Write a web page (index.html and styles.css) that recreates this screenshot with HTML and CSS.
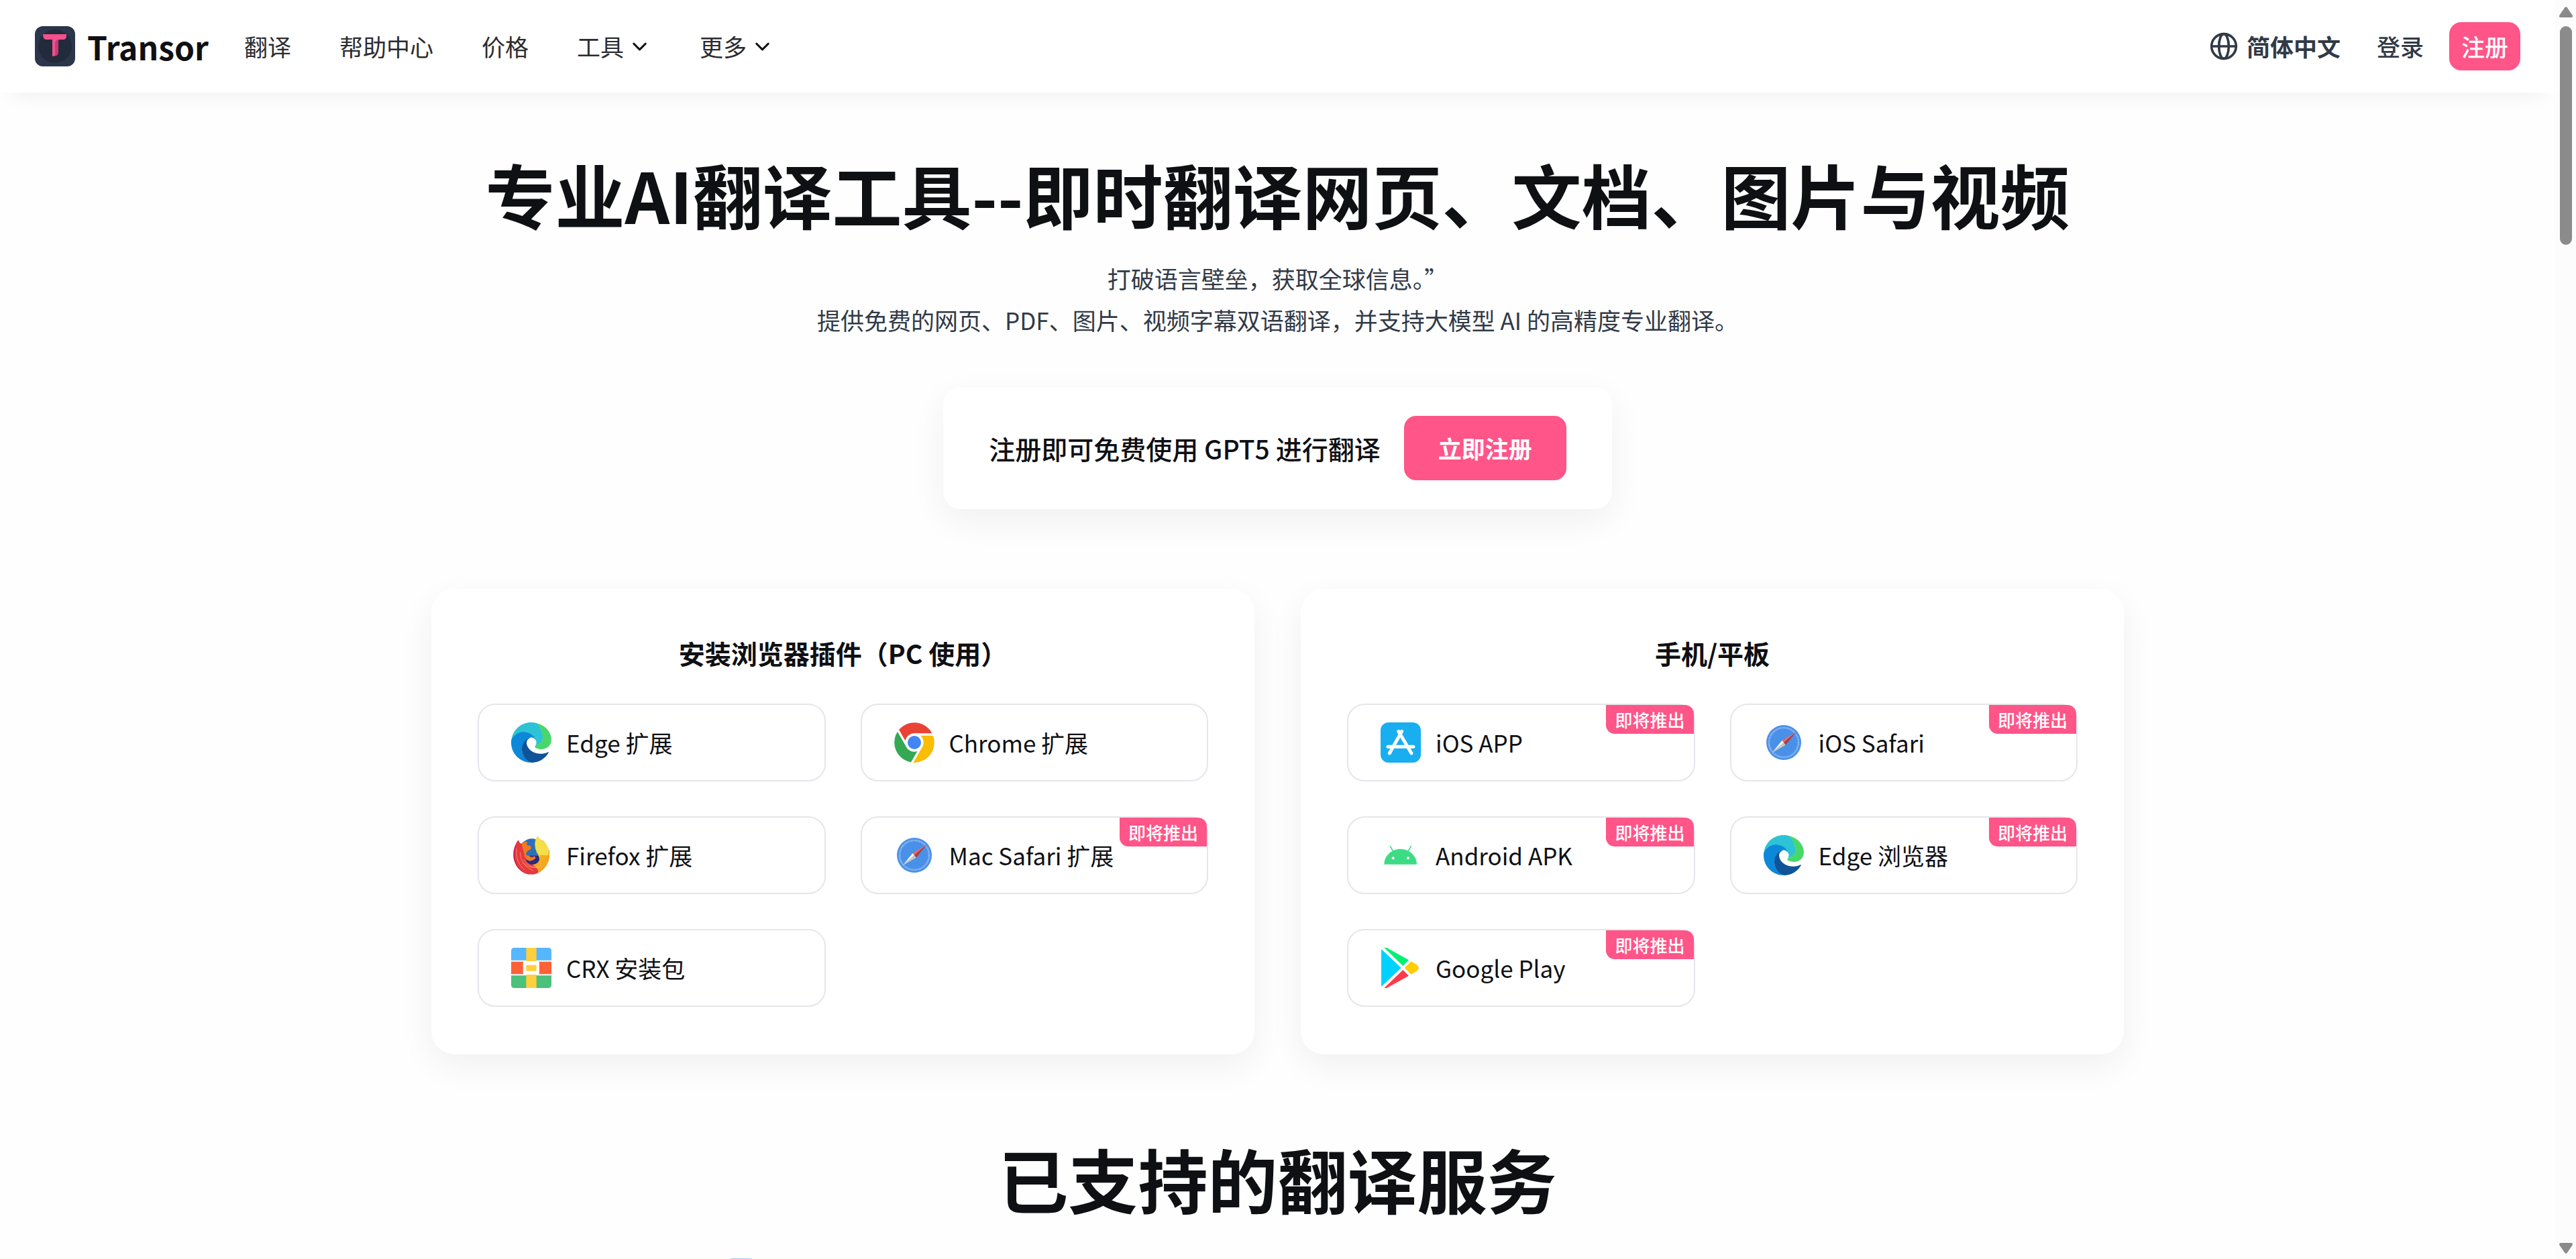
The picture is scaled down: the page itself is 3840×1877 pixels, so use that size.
FILE: index.html
```html
<!DOCTYPE html>
<html lang="zh-CN">
  <head>
    <meta charset="UTF-8" />
    <meta name="viewport" content="width=device-width, initial-scale=1.0" />
    <title>Transor</title>
    <link rel="stylesheet" href="styles.css">
  </head>
  <body>
    <!-- 公用图标 -->
    <svg class="sprite" aria-hidden="true">
      <symbol id="edge" viewBox="0 0 180 180">
        <path fill="#2dc3d6" d="M1 80C6 32 45 0 90 0c9 0 17 1 25 4 22 22 33 58 24 80-8 14-26 16-32 24 7-13 7-22 3-28-6-11-14-14-22-13L50 96Z" />
        <path fill="#0c88da" d="M1 78C18 48 42 42 58 43c28 2 50 20 54 46-3-16-14-23-24-22-26 7-40 35-40 55 2 30 22 55 47 58C42 182 0 142 0 90c0-4 0-8 1-12Z" />
        <path fill="#0f5499" d="M82 68C55 80 46 105 48 125c3 30 24 53 47 55 30-1 57-18 72-44 1-3-1-4-5-2-32 14-77 4-90-29-6-15-2-29 10-37Z" />
        <path fill="#49d769" d="M114 4c22 21 34 61 24 80-8 14-26 16-32 24-2 6 14 12 32 12 24-1 42-17 42-44-2-36-30-64-66-72Z" />
      </symbol>
      <symbol id="safari" viewBox="0 0 180 180">
        <circle cx="90" cy="90" r="78" fill="#4990e8" />
        <circle cx="90" cy="90" r="66" fill="none" stroke="#d5e6fb" stroke-width="8" stroke-dasharray="2 4" />
        <path fill="#e86a66" d="M146 42 82 81l8 9Z" />
        <path fill="#b13a3c" d="m146 42-56 48 8 11Z" />
        <path fill="#f5f5f5" d="m38 136 44-55 8 9Z" />
        <path fill="#c6c6c6" d="m38 136 52-46 8 11Z" />
      </symbol>
      <symbol id="down" viewBox="0 0 24 24">
        <path d="m6 9 6 6 6-6" fill="none" stroke="currentColor" stroke-width="2" stroke-linecap="round" stroke-linejoin="round" />
      </symbol>
    </svg>

    <div class="page">
      <header class="header">
        <a class="logo" href="#">
          <svg viewBox="0 0 60 60" aria-hidden="true">
            <rect width="60" height="60" rx="12" fill="#2b364a" />
            <circle cx="30" cy="30" r="25" fill="#222b3b" />
            <path fill="#f4508e" d="M12 12h35v3q0 5-5 5h-6q-1 0-1 2v16q0 6-9 7V20h-9q-5 0-5-8Z" />
            <path fill="#c93a75" d="M35 20v18q0 6-5 6.500V26q0-6 5-6Z" />
          </svg>
          <span>Transor</span>
        </a>
        <nav class="nav">
          <a href="#">翻译</a>
          <a href="#">帮助中心</a>
          <a href="#">价格</a>
          <button type="button">工具<svg><use href="#down" /></svg></button>
          <button type="button">更多<svg><use href="#down" /></svg></button>
        </nav>
        <div class="user">
          <button type="button" class="lang">
            <svg viewBox="0 0 24 24" fill="none" stroke="currentColor" stroke-width="2" aria-hidden="true">
              <circle cx="12" cy="12" r="10" />
              <ellipse cx="12" cy="12" rx="4" ry="10" />
              <path d="M2 12h20" />
            </svg>
            简体中文
          </button>
          <a class="login" href="#">登录</a>
          <a class="register" href="#">注册</a>
        </div>
      </header>

      <main class="main">
        <h1 class="title">专业AI翻译工具--即时翻译网页、文档、图片与视频</h1>
        <p class="desc">
          打破语言壁垒，获取全球信息。”<br />
          提供免费的网页、PDF、图片、视频字幕双语翻译，并支持大模型 AI 的高精度专业翻译。
        </p>

        <div class="trial">
          <span>注册即可免费使用 GPT5 进行翻译</span>
          <button type="button">立即注册</button>
        </div>

        <div class="cards">
          <section class="card">
            <h3>安装浏览器插件（PC 使用）</h3>
            <div class="list">
              <a class="item" href="#"><svg><use href="#edge" /></svg>Edge 扩展</a>
              <a class="item" href="#">
                <svg viewBox="0 0 180 180">
                  <defs>
                    <clipPath id="round"><circle cx="90" cy="90" r="90" /></clipPath>
                    <path id="leaf" d="M90 54H172.500A90 90 0 0 0 17.800 37L58.800 108Z" />
                    <path id="gap" d="M90 54H190" stroke="#fff" stroke-width="10" />
                  </defs>
                  <g clip-path="url(#round)">
                    <use href="#leaf" fill="#ea4335" />
                    <use href="#leaf" fill="#fbbc05" transform="rotate(120 90 90)" />
                    <use href="#leaf" fill="#34a853" transform="rotate(240 90 90)" />
                    <use href="#gap" />
                    <use href="#gap" transform="rotate(120 90 90)" />
                    <use href="#gap" transform="rotate(240 90 90)" />
                  </g>
                  <circle cx="90" cy="90" r="41" fill="#fff" />
                  <circle cx="90" cy="90" r="30" fill="#4285f4" />
                </svg>Chrome 扩展
              </a>
              <a class="item" href="#">
                <svg viewBox="0 0 180 180">
                  <circle cx="92" cy="70" r="54" fill="#2d6fba" />
                  <path fill="#2b2b80" d="M56 92h74q-2 40-38 42-34-4-36-42Z" />
                  <path fill="#c9205c" d="M32 22C12 48 8 76 10 98c6 46 40 76 74 78L40 90Z" />
                  <path fill="#e8383a" d="M32 22q4 12 12 16l14-8q-2 8 8 12l10 20-16 28q4 40 36 42 34-4 40-36l34-30c2 66-34 110-78 110-46-2-76-40-76-88 0-28 6-48 16-66Z" />
                  <path fill="#ee7a22" d="M46 38q16-10 26-8l-2 14 16 4 4 12-14 10q-12 6-8 20l12 2q12 12 24 2l6 8q-12 14-28 14-24-4-24-34Z" />
                  <path fill="#f4a61c" d="M140 22q32 30 31 76c-3 34-27 62-55 72 8-8 8-16-20-38 34-4 36-30 34-50Z" />
                  <path fill="#f4de4a" d="M119 3q4 12 20 20c24 18 32 36 28 64q-6 6-28 10l-8 40q-4-46-16-58-20-44 4-76Z" />
                  <path fill="#f6ad18" d="M128 90q16-2 32 2-4 24-46 48 18-22 14-50Z" />
                  <path fill="none" stroke="#f7b08a" stroke-width="2" d="M24 60q-8 60 36 96M40 76q0 60 60 84M56 108q22 44 74 34M52 122q30 36 90 18" />
                </svg>Firefox 扩展
              </a>
              <a class="item" href="#"><svg><use href="#safari" /></svg>Mac Safari 扩展<span class="badge">即将推出</span></a>
              <a class="item" href="#">
                <svg viewBox="0 0 180 180">
                  <path fill="#56b6ff" d="M14 0h152q14 0 14 14v42H0V14Q0 0 14 0Z" />
                  <path fill="#ff6137" d="M0 62h180v56H0Z" />
                  <path fill="#4bc17c" d="M0 124h180v42q0 14-14 14H14q-14 0-14-14Z" />
                  <path fill="#ffcf3d" d="M67 0h46v180H67Z" />
                  <rect x="53" y="60" width="73" height="60" rx="10" fill="#fff" />
                  <rect x="67" y="77" width="46" height="27" fill="#ffcf3d" />
                </svg>CRX 安装包
              </a>
            </div>
          </section>

          <section class="card">
            <h3>手机/平板</h3>
            <div class="list">
              <a class="item" href="#">
                <svg viewBox="0 0 180 180">
                  <rect width="180" height="180" rx="36" fill="#18aef0" />
                  <path fill="none" stroke="#fff" stroke-width="15" stroke-linecap="round" d="M80 40 138 138M95 40 40 138M33 109h114" />
                </svg>iOS APP<span class="badge">即将推出</span>
              </a>
              <a class="item" href="#"><svg><use href="#safari" /></svg>iOS Safari<span class="badge">即将推出</span></a>
              <a class="item" href="#">
                <svg viewBox="0 0 180 180">
                  <path fill="#3ddc84" d="M16 131a73 69 0 0 1 146 0Z" />
                  <path stroke="#3ddc84" stroke-width="5" stroke-linecap="round" d="m43 50 16 28M136 50l-16 28" />
                  <circle cx="56" cy="103" r="6" fill="#fff" />
                  <circle cx="123" cy="103" r="6" fill="#fff" />
                </svg>Android APK<span class="badge">即将推出</span>
              </a>
              <a class="item" href="#"><svg><use href="#edge" /></svg>Edge 浏览器<span class="badge">即将推出</span></a>
              <a class="item" href="#">
                <svg viewBox="0 0 180 180">
                  <path fill="#00d2ff" d="M3 9q0-3 3-1l86 82-86 82q-3 2-3-1Z" />
                  <path fill="#00f076" d="M16 0q8-2 16 2l94 53-26 26Z" />
                  <path fill="#ff3a4a" d="m100 99 26 26-94 53q-8 4-16 2Z" />
                  <path fill="#ffcc00" d="m137 61 26 16q15 13 0 26l-26 16-30-29Z" />
                </svg>Google Play<span class="badge">即将推出</span>
              </a>
            </div>
          </section>
        </div>

        <h2 class="title">已支持的翻译服务</h2>
        <div class="services">
          <svg viewBox="0 0 86 86" aria-hidden="true">
            <path fill="#a8c7fa" d="M4 0h29l14 40H0V4q0-4 4-4Z" />
          </svg>
        </div>
      </main>
    </div>

    <div class="scrollbar" aria-hidden="true">
      <svg viewBox="0 0 20 16"><path d="M8 1.500q2-2.500 4 0l7.500 11q1.500 3.500-1.500 3.500H2q-3 0-1.500-3.500Z" /></svg>
      <div class="thumb"></div>
      <svg class="end" viewBox="0 0 20 16"><path d="M8 14.500q2 2.500 4 0l7.500-11Q21 0 18 0H2Q-1 0 .500 3.500Z" /></svg>
    </div>
  </body>
</html>
```

FILE: styles.css
```css
* {
  margin: 0;
  padding: 0;
  box-sizing: border-box;
}
body {
  display: flex;
  height: 100vh;
  overflow: hidden;
  background-color: #fefefe;
  color: #0f1014;
  font-family: "Noto Sans CJK SC", "Noto Sans", sans-serif;
  font-size: 35px;
  line-height: 52px;
}
a {
  color: inherit;
  text-decoration: none;
}
button {
  border: none;
  background: none;
  color: inherit;
  font: inherit;
  cursor: pointer;
}
.sprite {
  position: absolute;
  width: 0;
  height: 0;
}
.page {
  flex: 1;
  min-width: 0;
  overflow: hidden;
}

/* 顶部导航 */
.header {
  display: flex;
  align-items: center;
  height: 138px;
  padding: 0 52px;
  background-color: #fff;
  box-shadow: 0 17px 35px -17px rgba(0, 0, 0, 0.08);
}
.logo {
  display: flex;
  align-items: center;
  gap: 18px;
  margin-right: 53px;
  font-size: 48px;
  font-weight: 700;
}
.logo svg {
  width: 60px;
  height: 60px;
}
.nav {
  display: flex;
  gap: 72px;
  color: #2b2c31;
}
.nav button {
  display: flex;
  align-items: center;
  gap: 6px;
}
.nav svg {
  width: 35px;
  height: 35px;
  color: #0f1014;
}
.user {
  display: flex;
  align-items: center;
  margin-left: auto;
  color: #313a46;
}
.lang {
  display: flex;
  align-items: center;
  gap: 12px;
  font-weight: 700;
}
.lang svg {
  width: 44px;
  height: 44px;
}
.login {
  margin: 0 38px 0 54px;
  font-weight: 500;
}
.register {
  padding: 10px 18px;
  border-radius: 18px;
  background-color: #ff5588;
  color: #fff;
  font-weight: 500;
}

.main {
  display: flex;
  flex-direction: column;
  align-items: center;
  padding-top: 99px;
  text-align: center;
}
.title {
  font-size: 104px;
  line-height: 104px;
  font-weight: 700;
}
.desc {
  margin-top: 43px;
  color: #313a46;
  line-height: 62px;
}

/* 注册试用 */
.trial {
  display: flex;
  align-items: center;
  gap: 35px;
  margin-top: 69px;
  padding: 43px 68px;
  border-radius: 26px;
  background-color: #fff;
  box-shadow: 0 17px 52px rgba(0, 0, 0, 0.06);
  font-size: 39px;
  font-weight: 500;
}
.trial button {
  padding: 22px 51px;
  border-radius: 18px;
  background-color: #ff5588;
  color: #fff;
  font-size: 35px;
  font-weight: 700;
}

/* 下载卡片 */
.cards {
  display: grid;
  grid-template-columns: 1fr 1fr;
  gap: 69px;
  width: 100%;
  max-width: 2523px;
  margin: 119px 0 133px;
}
.card {
  padding: 69px 69px 71px;
  border-radius: 35px;
  background-color: #fff;
  box-shadow: 0 17px 52px rgba(0, 0, 0, 0.06);
}
.card h3 {
  margin-bottom: 50px;
  font-size: 39px;
  font-weight: 700;
}
.list {
  display: grid;
  grid-template-columns: 1fr 1fr;
  gap: 52px;
}
.item {
  position: relative;
  display: flex;
  align-items: center;
  gap: 22px;
  padding: 26px 48px;
  border: 2px solid #e5e6eb;
  border-radius: 26px;
}
.item svg {
  width: 60px;
  height: 60px;
}
.badge {
  position: absolute;
  top: 0;
  right: 0;
  padding: 0 13px;
  border-radius: 0 13px 0 13px;
  background-color: #ff5588;
  color: #fff;
  font-size: 26px;
  line-height: 43px;
  font-weight: 500;
}

.services {
  display: flex;
  width: 100%;
  max-width: 1635px;
  margin-top: 67px;
}
.services svg {
  width: 86px;
  height: 86px;
}

/* 滚动条 */
.scrollbar {
  display: flex;
  flex-direction: column;
  align-items: center;
  width: 31px;
  padding: 10px 0 8px;
  background-color: #fcfcfc;
}
.scrollbar svg {
  width: 20px;
  height: 16px;
  fill: #8b8b8b;
}
.thumb {
  width: 18px;
  height: 326px;
  margin-top: 13px;
  border-radius: 9px;
  background-color: #8b8b8b;
}
.scrollbar .end {
  margin-top: auto;
}
```
